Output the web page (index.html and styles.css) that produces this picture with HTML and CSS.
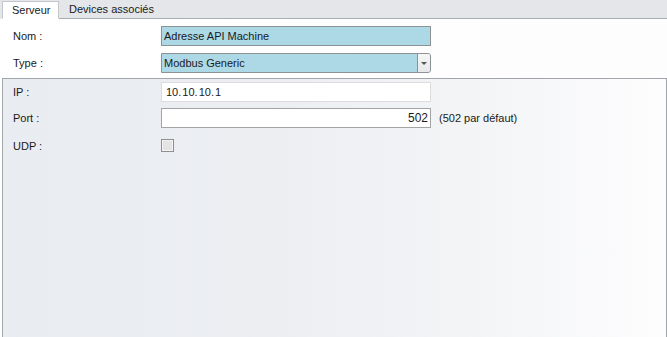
FILE: index.html
```html
<!DOCTYPE html>
<html>
<head>
<meta charset="utf-8">
<link rel="stylesheet" href="styles.css">
</head>
<body>
<div class="tabs">
  <div class="tab active">Serveur</div>
  <div class="tab">Devices associés</div>
  <div class="tab-fill"></div>
</div>
<div class="content">
  <div class="rows top">
    <div class="row">
      <span class="label">Nom :</span>
      <div class="input blue">Adresse API Machine</div>
    </div>
    <div class="row">
      <span class="label">Type :</span>
      <div class="select">
        <div class="select-text">Modbus Generic</div>
        <div class="select-btn"><span class="arrow"></span></div>
      </div>
    </div>
  </div>
  <div class="panel">
    <div class="rows">
      <div class="row">
        <span class="label">IP :</span>
        <div class="input light">10<span class="dot">.</span>10<span class="dot">.</span>10<span class="dot">.</span>1</div>
      </div>
      <div class="row">
        <span class="label">Port :</span>
        <div class="input right">502</div>
        <span class="hint">(502 par défaut)</span>
      </div>
      <div class="row chk-row">
        <span class="label">UDP :</span>
        <span class="checkbox"></span>
      </div>
    </div>
  </div>
</div>
</body>
</html>
```
FILE: styles.css
```css
html, body {
  margin: 0;
  padding: 0;
}
body {
  width: 667px;
  height: 337px;
  overflow: hidden;
  font-family: "Liberation Sans", Arial, sans-serif;
  font-size: 11px;
  color: #1a1a1a;
  background: #fff;
}
.tabs {
  display: flex;
  align-items: flex-end;
  height: 19px;
  background: #e4e6e9;
  padding-left: 2px;
  box-sizing: border-box;
}
.tab {
  height: 18px;
  line-height: 17px;
  padding: 0 10px;
  box-sizing: border-box;
  border-bottom: 1px solid #a9acb0;
  color: #1a1a1a;
}
.tab.active {
  background: #fff;
  border: 1px solid #c3c6ca;
  border-bottom: 1px solid #fff;
  height: 18px;
  width: 57px;
  padding: 0 0 0 9px;
}
.tab-fill {
  flex: 1;
  border-bottom: 1px solid #a9acb0;
}
.content {
  height: 318px;
  background: linear-gradient(to right, #ffffff, #fdfdfe);
  padding-top: 7px;
  box-sizing: border-box;
}
.rows {
  display: flex;
  flex-direction: column;
}
.top {
  padding-left: 13px;
  gap: 7px;
}
.row {
  display: flex;
  align-items: center;
  height: 20px;
}
.label {
  width: 148px;
  flex: none;
}
.input {
  width: 270px;
  height: 20px;
  box-sizing: border-box;
  border: 1px solid #9b9b9b;
  background: #fff;
  padding: 0 3px;
  line-height: 18px;
  white-space: nowrap;
}
.input.blue {
  background: #add8e6;
  border-color: #8e9294;
  padding-left: 2px;
}
.input.light {
  border-color: #dcdcdc;
  padding-left: 4px;
}
.input.right {
  text-align: right;
  padding-right: 2px;
  border-color: #a4a4a4;
  font-size: 12px;
}
.dot {
  padding-right: 1px;
}
.hint {
  margin-left: 8px;
}
.select {
  width: 270px;
  height: 20px;
  box-sizing: border-box;
  border: 1px solid #8e9294;
  border-radius: 0 3px 3px 0;
  display: flex;
  background: #add8e6;
  overflow: hidden;
}
.select-text {
  flex: 1;
  line-height: 18px;
  padding-left: 2px;
}
.select-btn {
  width: 12px;
  border-left: 1px solid #8e9294;
  background: linear-gradient(#f6f6f6, #e8e8ea);
  display: flex;
  align-items: center;
  justify-content: center;
}
.arrow {
  width: 0;
  height: 0;
  border-left: 3px solid transparent;
  border-right: 3px solid transparent;
  border-top: 3px solid #555;
  margin-top: 1px;
}
.panel {
  margin: 5px 0 0 2px;
  height: 260px;
  border: 1px solid #a2a6aa;
  border-bottom: none;
  background: linear-gradient(to right, #e9ecf0 0%, #eceef2 40%, #f3f4f6 70%, #fdfdfe 100%);
  padding: 3px 0 0 10px;
}
.panel .rows {
  gap: 6px;
}
.chk-row {
  margin-top: 5px;
  height: 13px;
}
.checkbox {
  width: 13px;
  height: 13px;
  box-sizing: border-box;
  border: 1px solid #8f8f8f;
  background: #e4e4e4;
  box-shadow: inset 0 0 0 1px #f4f4f4;
}
```
